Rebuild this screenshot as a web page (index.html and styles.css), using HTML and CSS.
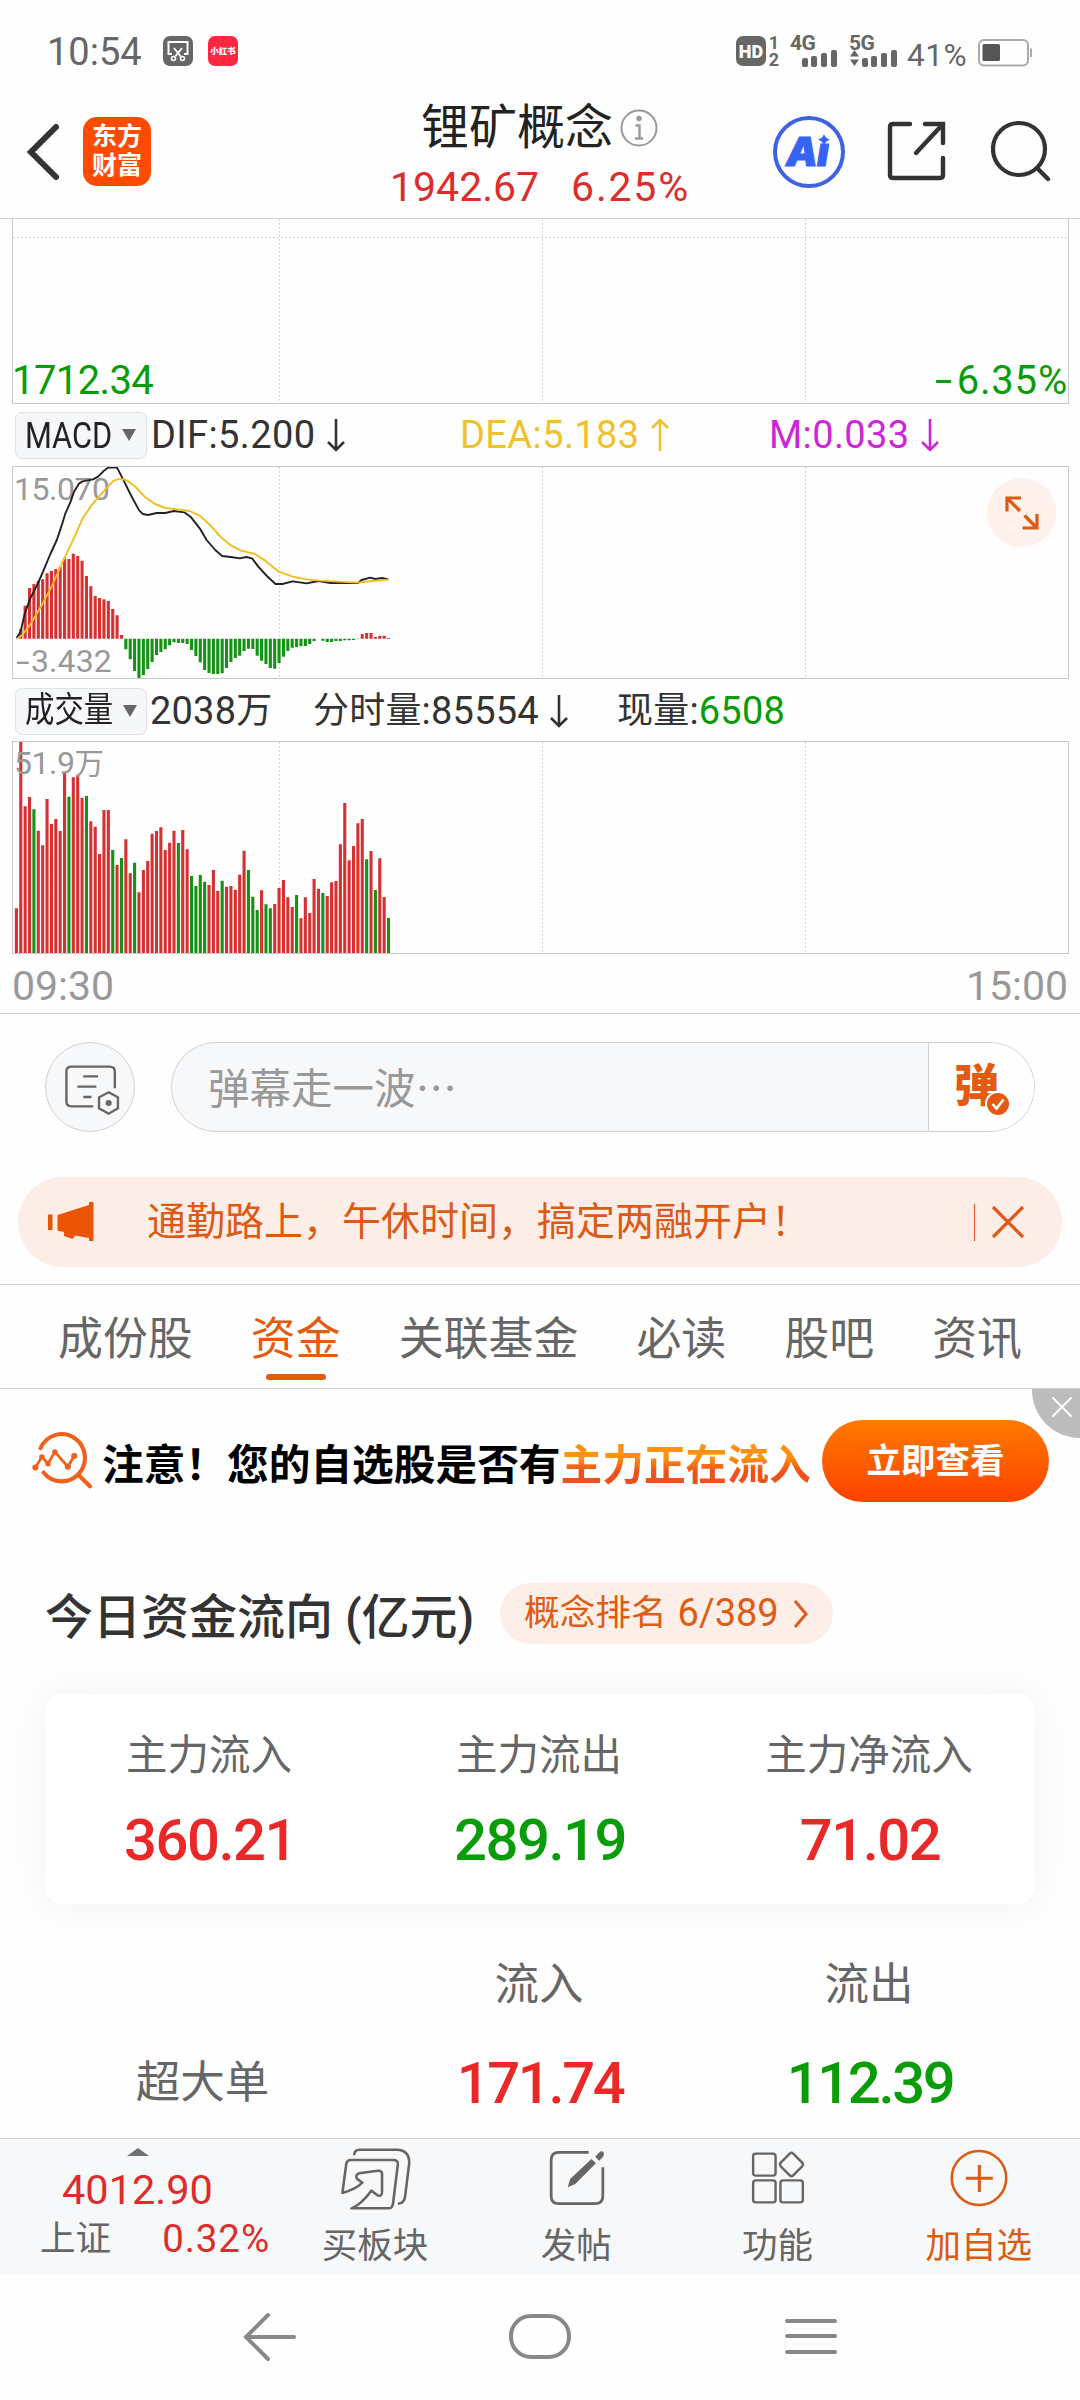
FILE: index.html
```html
<!DOCTYPE html>
<html lang="zh-CN">
<head>
<meta charset="utf-8">
<title>锂矿概念</title>
<link rel="stylesheet" href="styles.css">
</head>
<body>
<div class="status">
  <span class="clock">10:54</span>
  <svg class="shot" width="30" height="30" viewBox="0 0 30 30"><rect width="30" height="30" rx="7" fill="#666"/><path d="M9 18H5.500V6H24.500V18H21" fill="none" stroke="#fff" stroke-width="2"/><path d="M11 12L19 22M19 12L11 22" stroke="#fff" stroke-width="2"/><circle cx="10.500" cy="22.500" r="2" fill="#666" stroke="#fff" stroke-width="1.600"/><circle cx="19.500" cy="22.500" r="2" fill="#666" stroke="#fff" stroke-width="1.600"/></svg>
  <span class="xhs">小红书</span>
  <span class="hd">HD</span>
  <span class="sims"><b>1</b><b>2</b></span>
  <span class="net net4"><b>4G</b><svg width="36" height="17" viewBox="0 0 36 17"><g fill="#666"><rect x="1" y="8" width="6" height="9" rx="2"/><rect x="10" y="6" width="6" height="11" rx="2"/><rect x="20" y="3" width="6" height="14" rx="2"/><rect x="30" y="0" width="6" height="17" rx="2"/></g></svg></span>
  <span class="net net5"><b>5G</b><svg width="48" height="17" viewBox="0 0 48 17"><g fill="#666"><path d="M5.500 0L10 6.500H1ZM5.500 16L10 9.500H1Z"/><rect x="13" y="8" width="6" height="9" rx="2"/><rect x="22" y="6" width="6" height="11" rx="2"/><rect x="32" y="3" width="6" height="14" rx="2"/><rect x="42" y="0" width="6" height="17" rx="2"/></g></svg></span>
  <span class="pct">41%</span>
  <svg class="batt" width="54" height="28" viewBox="0 0 54 28"><rect x="1" y="1" width="49" height="25.500" rx="5" fill="none" stroke="#aaa" stroke-width="2"/><rect x="4.500" y="5" width="17.500" height="17" rx="1.500" fill="#555"/><path d="M53 9.500V18" stroke="#aaa" stroke-width="2"/></svg>
</div>

<header class="header">
  <svg class="back" width="36" height="60" viewBox="0 0 36 60"><path d="M30 5L5 30L30 55" fill="none" stroke="#333" stroke-width="6" stroke-linecap="round"/></svg>
  <div class="logo"><span>东方</span><span>财富</span></div>
  <div class="heading">
    <div class="name">锂矿概念<svg width="38" height="38" viewBox="0 0 38 38"><circle cx="19" cy="19" r="17.500" fill="none" stroke="#999" stroke-width="2"/><circle cx="19" cy="9.500" r="2.700" fill="#999"/><path d="M15.500 16.500H19.500V29M15 29.500H23" fill="none" stroke="#999" stroke-width="2.400"/></svg></div>
    <div class="quote"><span>1942.67</span><span class="chg">6.25%</span></div>
  </div>
  <svg class="ai" width="72" height="74" viewBox="0 0 72 74"><circle cx="36" cy="37" r="34" fill="none" stroke="#3f63df" stroke-width="4"/><text x="13" y="50.500" class="ai-text">A</text><text x="44" y="50.500" class="ai-text">ı</text><path d="M51 19Q52.500 23.500 57 24.500Q52.500 26 51 30.500Q49.500 26 45 24.500Q49.500 23.500 51 19Z" fill="#3763f4"/></svg>
  <svg class="share" width="60" height="60" viewBox="0 0 60 60"><path d="M23 3H6Q3 3 3 6V54Q3 57 6 57H53Q56 57 56 54V37M38 3H56V22M56 3L29 32" fill="none" stroke="#333" stroke-width="4.400" stroke-linecap="round"/></svg>
  <svg class="search" width="60" height="64" viewBox="0 0 60 64"><circle cx="28" cy="29" r="26" fill="none" stroke="#333" stroke-width="4.200"/><path d="M46 48L57 59" stroke="#333" stroke-width="4.400" stroke-linecap="round"/></svg>
</header>

<section class="panel price">
  <svg class="plot" width="1055" height="185"><path class="dots" d="M0 18.500H1056M266.500 0V185M529.500 0V185M792.500 0V185"/></svg>
  <span class="low">1712.34</span><span class="drop"><span class="minus">-</span>6.35%</span>
</section>

<div class="indicator">
  <button class="picker latin"><span>MACD</span><i></i></button>
  <span class="c1">DIF:5.200<svg class="arr" width="18" height="34" viewBox="0 0 18 34"><path d="M9 1V32M1 24L9 32L17 24"/></svg></span>
  <span class="c2">DEA:5.183<svg class="arr" width="18" height="34" viewBox="0 0 18 34"><path d="M9 33V2M1 10L9 2L17 10"/></svg></span>
  <span class="c3">M:0.033<svg class="arr" width="18" height="34" viewBox="0 0 18 34"><path d="M9 1V32M1 24L9 32L17 24"/></svg></span>
</div>
<section class="panel sub">
  <svg class="plot" width="1055" height="211"><path class="dots" d="M266.500 0V211M529.500 0V211M792.500 0V211"/></svg>
  <span class="tag top">15.070</span><span class="tag bottom"><span class="minus">-</span>3.432</span>
  <svg class="plot" width="1055" height="211"><g id="macd-bars"></g>
    <g transform="translate(-13,-117) scale(.34436,.33333)" class="lines">
      <polyline stroke="#222" points="48,864 60,845 72,790 88,745 110,700 125,665 145,615 165,570 178,530 190,490 205,455 215,425 230,400 240,394 270,388 285,380 300,364 315,352 340,353 356,385 380,435 404,481 415,492 430,495 455,489 480,489 505,483 535,487 555,502 580,535 600,570 625,600 645,618 670,621 697,625 715,621 732,625 750,650 775,678 800,702 820,702 850,694 890,700 925,693 960,699 1040,699 1050,690 1075,683 1090,687 1110,684 1128,688"/>
      <polyline stroke="#f0bd1c" points="50,866 65,855 90,820 120,768 150,710 180,640 210,575 240,505 270,460 300,425 330,392 350,386 370,392 395,412 420,440 450,462 480,474 520,479 550,483 580,497 610,525 640,560 670,586 700,602 740,612 770,632 810,665 850,680 890,688 930,692 980,695 1040,698 1080,693 1128,689"/>
    </g>
  </svg>
  <span class="expand"><svg width="34" height="34" viewBox="0 0 34 34"><path d="M2 15.500V2H16M2 2L15 15M32 18V32H17.500M32 32L19.500 19.500" fill="none" stroke="#d95b14" stroke-width="3.200"/></svg></span>
</section>

<div class="indicator volume">
  <button class="picker"><span>成交量</span><i></i></button>
  <span class="v1">2038<em>万</em></span>
  <span class="v2"><em>分时量</em>:85554<svg class="arr" width="18" height="34" viewBox="0 0 18 34"><path d="M9 1V32M1 24L9 32L17 24"/></svg></span>
  <span class="v3"><em>现量</em>:<b>6508</b></span>
</div>
<section class="panel sub">
  <svg class="plot" width="1055" height="211"><path class="dots" d="M266.500 0V211M529.500 0V211M792.500 0V211"/><g id="volume-bars"></g></svg>
  <span class="tag top vol">51.9<em>万</em></span>
</section>
<div class="axis"><span>09:30</span><span>15:00</span></div>

<div class="barrage">
  <span class="setting"><svg width="56" height="52" viewBox="184 158 163 156" preserveAspectRatio="none"><path d="M269 285H205Q191 285 191 270V180Q191 166 206 166H317Q332 166 332 181V231M240 195H283M223 226H278M240 257H264" fill="none" stroke="#666" stroke-width="7"/><path d="M314 243L341 258V291L314 307L286 291V258Z" fill="none" stroke="#666" stroke-width="7"/><circle cx="314" cy="275" r="9" fill="#666"/></svg></span>
  <div class="field"><span class="ph">弹幕走一波…</span><span class="send">弹<svg width="26" height="26" viewBox="0 0 26 26"><circle cx="13" cy="13" r="12" fill="#e35a10" stroke="#fff" stroke-width="2"/><path d="M7.500 13L11.500 17.500L18.500 8.500" fill="none" stroke="#fff" stroke-width="2.600"/></svg></span></div>
</div>

<div class="notice">
  <svg width="46" height="40" viewBox="0 0 46 40"><path d="M0 12.500H4.500V28H0ZM9.500 13L41 3V0H45.500V39H41V36L27 33.500L24.500 37L16 34V30L9.500 28.500Z" fill="#ea5404"/></svg>
  <span class="msg">通勤路上，午休时间，搞定两融开户！</span>
  <i></i>
  <svg width="34" height="34" viewBox="0 0 34 34"><path d="M2 2L32 32M32 2L2 32" stroke="#e0591a" stroke-width="3.200"/></svg>
</div>

<nav class="tabs"><span>成份股</span><span class="on">资金</span><span>关联基金</span><span>必读</span><span>股吧</span><span>资讯</span></nav>

<section class="banner">
  <svg width="60" height="58" viewBox="94 156 176 172" preserveAspectRatio="none"><path d="M119 207A68 70 0 1 1 128 279M232 288L264 320" fill="none" stroke="#f0601a" stroke-width="12" stroke-linecap="round"/><path d="M104 264L123 233L141 253L161 218L199 262L218 230" fill="none" stroke="#f0601a" stroke-width="8"/><g fill="#f0601a"><circle cx="104" cy="264" r="9"/><circle cx="123" cy="233" r="8"/><circle cx="141" cy="253" r="8"/><circle cx="161" cy="218" r="8"/><circle cx="199" cy="262" r="9"/><circle cx="218" cy="230" r="9"/></g></svg>
  <strong>注意！您的自选股是否有<em>主力正在流入</em></strong>
  <button>立即查看</button>
  <span class="close"><svg width="22" height="22" viewBox="0 0 22 22"><path d="M1.500 1.500L20.500 20.500M20.500 1.500L1.500 20.500" stroke="#fff" stroke-width="2"/></svg></span>
</section>

<div class="flow-title"><h2>今日资金流向 (亿元)</h2><span class="rank">概念排名 <b>6/389</b><svg width="18" height="30" viewBox="0 0 18 30"><path d="M2 2L13 15L2 28" fill="none" stroke="#dd5c16" stroke-width="3"/></svg></span></div>

<div class="card">
  <div><span>主力流入</span><b class="red">360.21</b></div>
  <div><span>主力流出</span><b class="green">289.19</b></div>
  <div><span>主力净流入</span><b class="red">71.02</b></div>
</div>

<div class="table">
  <span></span><span>流入</span><span>流出</span>
  <span class="kind">超大单</span><b class="red">171.74</b><b class="green">112.39</b>
</div>

<footer class="toolbar">
  <div class="index"><svg width="22" height="8" viewBox="0 0 22 8"><path d="M0 8L11 0L22 8Z" fill="#6d7075"/></svg><span class="pts">4012.90</span><div class="idx-row"><span>上证</span><b>0.32%</b></div></div>
  <div class="tool"><svg width="74" height="66" viewBox="982 168 215 198" preserveAspectRatio="none"><path d="M1026 196Q1026 179 1042 179H1150Q1187 180 1186 220L1174 320Q1172 340 1153 341M992 309L1003 222Q1005 210 1017 210H1140Q1154 210 1153 223L1139 340Q1137 355 1127 355H1018Q1045 345 1076 302L1096 317Q1107 320 1107 305V250Q1106 241 1095 242L1040 250Q1028 256 1034 266L1050 278Q1030 298 992 309Z" fill="none" stroke="#666" stroke-width="7.500" stroke-linejoin="round"/></svg><span>买板块</span></div>
  <div class="tool"><svg width="62" height="66" viewBox="18 168 180 198" preserveAspectRatio="none"><path d="M142 187H55Q33 187 33 210V318Q33 341 55 341H160Q183 341 183 318V232" fill="none" stroke="#666" stroke-width="8"/><path d="M81 292L88 267L150 207L163 220L103 282ZM161 200L173 187Q180 181 185 187Q189 194 184 200L172 212Z" fill="#666"/></svg><span>发帖</span></div>
  <div class="tool"><svg width="58" height="66" viewBox="608 168 168 198" preserveAspectRatio="none"><g fill="none" stroke="#666" stroke-width="7" stroke-linejoin="round"><rect x="620" y="191" width="65" height="66" rx="8"/><rect x="620" y="271" width="65" height="66" rx="8"/><rect x="699" y="271" width="65" height="66" rx="8"/><path d="M726 191Q731 185 736 191L762 218Q767 223 762 229L736 256Q731 261 726 256L700 229Q695 223 700 218Z"/></g></svg><span>功能</span></div>
  <div class="tool add"><svg width="60" height="66" viewBox="1188 168 174 198" preserveAspectRatio="none"><ellipse cx="1275" cy="264" rx="79" ry="81" fill="none" stroke="#d95b14" stroke-width="7.500"/><path d="M1237 265H1315M1276 225V306" stroke="#d95b14" stroke-width="9"/></svg><span>加自选</span></div>
</footer>
<div class="sysnav">
  <svg width="54" height="50" viewBox="0 0 54 50"><path d="M26 3L4 25L26 47M4 25H52" fill="none" stroke="#888" stroke-width="4" stroke-linecap="round"/></svg>
  <svg width="62" height="46" viewBox="0 0 62 46"><rect x="2" y="2" width="58" height="41" rx="20" fill="none" stroke="#888" stroke-width="4"/></svg>
  <svg width="54" height="38" viewBox="0 0 54 38"><path d="M3 3H51M3 18H51M3 34H51" stroke="#888" stroke-width="4" stroke-linecap="round"/></svg>
</div>
<script src="chart.js"></script>
</body>
</html>
```
FILE: styles.css
```css
* { box-sizing: border-box; }
body { margin: 0; width: 1080px; height: 2400px; overflow: hidden; background: #fefefe; color: #333; font-family: Roboto, "Noto Sans CJK SC", sans-serif; }
svg { display: block; flex: none; }
em { font-style: normal; }
button { border: 0; padding: 0; font-family: inherit; }
.red { color: #ea2828; }
.green { color: #089c08; }
.minus { display: inline-block; width: 22px; transform: scaleX(1.55); transform-origin: left; }

.status { height: 103px; display: flex; align-items: flex-start; color: #666; }
.clock { margin-left: 47px; width: 116px; font-size: 38px; line-height: 104px; }
.shot { margin-top: 36px; }
.xhs { margin: 36px 0 0 15px; width: 30px; height: 30px; border-radius: 7px; background: #ff2742; color: #fff; font-size: 8.500px; font-weight: 900; line-height: 31px; text-align: center; }
.hd { margin: 36px 0 0 498px; width: 30px; height: 30px; border-radius: 7px; background: #666; color: #fff; font-size: 18px; font-weight: 900; line-height: 31px; text-align: center; }
.sims { margin: 34px 0 0 2px; width: 12px; display: flex; flex-direction: column; font-size: 18px; line-height: 17px; align-items: center; }
.net { margin-top: 36px; height: 30px; position: relative; font-size: 21px; line-height: 15px; letter-spacing: -.5px; }
.net b { display: block; height: 14px; }
.net4 { margin-left: 10px; width: 48px; }
.net4 svg { margin-left: 11px; }
.net5 { margin-left: 11px; width: 49px; }
.pct { margin-left: 9px; width: 71px; font-size: 31.500px; letter-spacing: .6px; line-height: 112px; white-space: nowrap; }
.batt { margin-top: 39px; }

.header { height: 116px; border-bottom: 1px solid #d2d2d2; display: flex; position: relative; }
.back { margin: 19px 0 0 26px; }
.logo { margin: 14px 0 0 21px; width: 68px; height: 69px; border-radius: 14px; background: #ff4b00; color: #fff; font-size: 25px; font-weight: 700; line-height: 29px; padding-top: 5px; text-align: center; }
.logo span { display: block; }
.heading { margin-left: 239px; width: 360px; }
.name { display: flex; align-items: center; margin-left: 31px; height: 50px; font-size: 48px; line-height: 52px; color: #222; font-weight: 400; }
.name svg { margin-left: 7px; margin-top: 0; }
.quote { display: flex; gap: 32px; font-size: 41px; line-height: 50px; margin-top: 9px; color: #dc2c2c; }
.chg { letter-spacing: 1.800px; }
.ai { margin: 12px 0 0 23px; }
.ai-text { font: italic 900 40px Inter, sans-serif; fill: #3763f4; stroke: #3763f4; stroke-width: 1px; }
.share { margin: 18px 0 0 42px; }
.search { margin: 17px 0 0 44px; }

.panel { position: relative; margin-left: 12px; width: 1057px; border: 1px solid #c8c8c8; }
.plot { position: absolute; left: 0; top: 0; }
.dots { fill: none; stroke: #c9c9c9; stroke-width: 1; stroke-dasharray: 1.500 2.500; }
.price { height: 185px; border-top: 0; color: #089c08; font-size: 40px; line-height: 44px; }
.low { position: absolute; left: -1px; bottom: 0; letter-spacing: -.6px; }
.drop { position: absolute; right: 0; bottom: 0; letter-spacing: .8px; }
.sub { height: 213px; }
.tag { position: absolute; left: 1px; font-size: 32px; line-height: 36px; color: #999; }
.tag.top { top: 4px; letter-spacing: -.5px; }
.tag.top.vol { top: 3px; }
.tag.vol em { font-size: 29.500px; }
.tag.bottom { bottom: -1px; left: 3px; letter-spacing: .1px; }
.tag .minus { width: 15px; }
.lines polyline { fill: none; stroke-width: 1.900; vector-effect: non-scaling-stroke; stroke-linejoin: round; }
.expand { position: absolute; right: 12px; top: 11px; width: 69px; height: 69px; border-radius: 50%; background: #fef0ea; display: grid; place-items: center; }

.indicator { height: 62px; display: grid; grid-template-columns: 132px 308px 310px 300px; column-gap: 0; padding-left: 15px; align-items: center; font-size: 38px; line-height: 62px; letter-spacing: .4px; }
.indicator > span { display: flex; align-items: center; }
.c1, .v1 { padding-left: 4px; }
.c2 { padding-left: 5px; color: #edc22e; }
.c3 { padding-left: 4px; color: #cb27d6; }
.arr { margin-left: 11px; }
.arr path { fill: none; stroke: currentColor; stroke-width: 2.600; }
.picker { width: 132px; height: 47px; border: 1px solid #dfe2e6; border-radius: 7px; background: #f6f7fa; display: flex; align-items: center; color: #222; }
.picker span { font-size: 35px; line-height: 46px; width: 98px; margin-left: 9px; transform: scaleX(.84); transform-origin: left; white-space: nowrap; flex: none; text-align: left; letter-spacing: 0; }
.picker.latin span { font-size: 37.500px; transform: scaleX(.82); width: 96px; }
.picker i { border: 7px solid transparent; border-top: 12px solid #666; border-bottom: 0; }
.picker.latin i { margin-left: 1px; }
.volume { grid-template-columns: 132px 166px 304px 300px; letter-spacing: .2px; line-height: 64px; }
.volume em { font-size: 36px; }
.v1 { padding-left: 3px; }
.v3 b { font-weight: 400; color: #089c08; }

.axis { height: 60px; border-bottom: 1px solid #d2d2d2; display: flex; justify-content: space-between; padding: 0 12px; font-size: 41px; line-height: 64px; color: #999; }

.barrage { display: flex; padding: 28px 45px 0; height: 163px; }
.setting { width: 90px; height: 90px; border: 1px solid #cfd1d4; border-radius: 50%; background: #f7f8fa; display: grid; place-items: center; padding-top: 5px; padding-left: 3px; }
.field { margin-left: 36px; width: 864px; height: 90px; border: 1px solid #cfd1d4; border-radius: 45px; background: #f7f8fa; display: flex; overflow: hidden; }
.ph { width: 756px; padding-left: 36px; font-family: "Noto Sans CJK SC", sans-serif; font-size: 41.500px; line-height: 87px; color: #999; }
.send { flex: 1; position: relative; border-left: 1px solid #cfd1d4; background: #fefefe; padding-left: 25px; font-size: 45px; font-weight: 900; line-height: 87px; color: #e35a10; }
.send svg { position: absolute; left: 56px; top: 48px; }

.notice { margin: 0 18px; height: 90px; border-radius: 45px; background: #fceee6; color: #dc5a16; display: flex; align-items: center; padding-left: 30px; }
.msg { width: 848px; padding-left: 53px; font-size: 39px; line-height: 91px; white-space: nowrap; }
.notice i { width: 1px; height: 37px; background: #d95b14; margin: 0 16px 0 32px; }

.tabs { margin-top: 17px; height: 105px; border: solid #d2d2d2; border-width: 1px 0; display: flex; justify-content: space-between; padding: 0 58px 0 58px; font-size: 44.900px; line-height: 110px; color: #666; }
.on { position: relative; color: #e35a10; }
.on::after { content: ""; position: absolute; left: 50%; bottom: 8px; width: 60px; height: 6px; margin-left: -30px; border-radius: 3px; background: #e35a10; }

.banner { position: relative; height: 174px; display: flex; padding-left: 32px; }
.banner > svg { margin-top: 42px; }
.banner strong { margin-left: 10px; width: 720px; font-size: 41.700px; line-height: 153px; font-weight: 700; color: #000; white-space: nowrap; }
.banner em { background: linear-gradient(#ff9010 35%, #f0501a 62%); -webkit-background-clip: text; background-clip: text; color: transparent; }
.banner button { width: 227px; height: 82px; margin-top: 31px; border-radius: 41px; background: linear-gradient(#ff7a00, #ff4200); color: #fff; font-size: 34.500px; font-weight: 700; line-height: 80px; }
.close { position: absolute; right: 0; top: 0; width: 48px; height: 49px; border-bottom-left-radius: 48px; background: #bcbcbc; padding: 7px 0 0 19px; }

.flow-title { height: 131px; display: flex; padding: 20px 0 0 45px; }
.flow-title h2 { margin: 0; width: 455px; font-size: 48px; line-height: 69px; font-weight: 500; white-space: nowrap; }
.rank { width: 333px; height: 61px; border-radius: 31px; background: #fdeee7; display: flex; align-items: center; padding-left: 24px; font-size: 35.700px; line-height: 63px; color: #dd5c16; white-space: pre; }
.rank b { font-weight: 400; font-size: 38px; margin-left: 2px; }
.rank svg { margin-left: 14px; }

.card { margin: 0 45px; height: 210px; border-radius: 18px; background: #fff; box-shadow: 0 0 45px rgba(0, 0, 0, .06); display: grid; grid-template-columns: repeat(3, 1fr); text-align: center; padding-top: 32px; }
.card span { display: block; font-size: 41.500px; line-height: 60px; color: #666; margin-left: -2px; }
.card b, .table b { font-size: 58px; font-weight: 500; letter-spacing: -1.500px; line-height: 70px; }
.card b { display: block; margin-top: 19px; }
.table { height: 234px; overflow: hidden; margin: 0 45px; padding-top: 42px; display: grid; grid-template-columns: repeat(3, 1fr); grid-template-rows: 78px 118px; align-items: center; text-align: center; font-size: 44.500px; color: #666; line-height: 78px; }
.table b { letter-spacing: -2.400px; }
.table span { margin-left: -2px; }
.kind { padding-right: 13px; }

.toolbar { height: 136px; border-top: 1px solid #cfd1d3; background: #f7f8fa; display: grid; grid-template-columns: 275px repeat(4, 1fr); }
.index { display: flex; flex-direction: column; align-items: center; padding-top: 9px; color: #dc2c2c; }
.pts { font-size: 41.500px; line-height: 50px; margin-top: 9px; }
.idx-row { width: 275px; display: flex; justify-content: space-between; padding: 0 5px 0 40px; line-height: 48px; font-size: 35.500px; }
.idx-row span { color: #666; }
.idx-row b { font-weight: 400; font-size: 38.500px; letter-spacing: .9px; }
.tool { display: flex; flex-direction: column; align-items: center; padding-top: 7px; font-size: 35.500px; color: #666; }
.tool span { line-height: 48px; margin: 10px 0 0 -1px; }
.add { color: #d95b14; }
.sysnav { height: 126px; padding: 0 242px; display: flex; justify-content: space-between; align-items: center; }
```
FILE: chart.js
```js
// One bar per minute; values are offsets in thirds of a pixel from the panel top.
const PITCH = 4.378, FIRST = 3.4;

function draw(id, tops, base, isUp) {
  const colours = { up: '', down: '' };
  tops.forEach((t, i) => {
    if (t === null || t === base) return;
    const x = (FIRST + i * PITCH).toFixed(2);
    colours[isUp(i, t) ? 'up' : 'down'] += `M${x} ${(base / 3).toFixed(1)}V${(t / 3).toFixed(1)}`;
  });
  document.getElementById(id).innerHTML =
    `<path d="${colours.up}" stroke="#d63030" stroke-width="3.1"/>` +
    `<path d="${colours.down}" stroke="#149214" stroke-width="3.1"/>`;
}

const macd = [null, 837, 767, 714, 702, 693, 688, 670, 663, 657, 651, 625, 627, 611, 618, 632, 678, 709, 738, 744, 748, 753, 777, 796, 855,
  898, 928, 963, 984, 975, 957, 936, 915, 906, 898, 886, 877, 879, 879, 882, 900, 918, 937, 960, 969, 972, 972, 970, 954, 936, 924, 917, 903,
  896, 897, 917, 932, 942, 954, 956, 939, 920, 903, 893, 891, 889, 888, 882, 873, 866, 872, 876, 876, 873, 873, 871, 871, 870, 867, 852, 849,
  849, 861, 858, 857, 864].map(v => v === null ? null : v - 351);
draw('macd-bars', macd, 515, (i, t) => t < 515);

const volume = [685, 186, 379, 351, 388, 452, 496, 357, 432, 417, 453, 275, 350, 292, 285, 353, 348, 424, 440, 522, 390, 390, 510, 555, 534,
  478, 580, 548, 637, 570, 543, 461, 453, 442, 510, 488, 452, 489, 450, 508, 588, 618, 585, 605, 615, 570, 633, 602, 620, 618, 629, 584, 512,
  570, 650, 690, 631, 673, 685, 672, 624, 600, 652, 681, 645, 715, 652, 699, 597, 626, 639, 648, 607, 603, 493, 369, 541, 498, 430, 417, 538,
  513, 630, 535, 651, 714].map(v => v - 186);
const falling = new Set([4, 12, 16, 22, 24, 27, 37, 40, 41, 42, 43, 47, 53, 54, 55, 57, 58, 64, 70, 80, 82, 85]);
draw('volume-bars', volume, 633, i => !falling.has(i));
```
